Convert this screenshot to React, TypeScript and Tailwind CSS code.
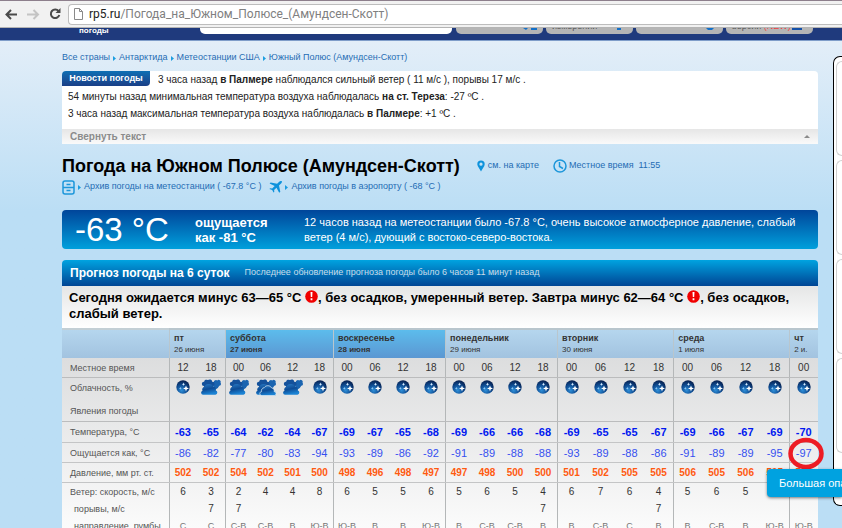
import type { ReactNode } from "react";

type Sky = "clear" | "cloud" | "overcast";

interface Hour {
  time: string;
  sky: Sky;
  temp: number;
  feels: number;
  pressure: number;
  wind: number;
  gust?: number;
  dir: string;
}

interface Day {
  name: string;
  date: string;
  col: string;
  weekend?: boolean;
  hours: Hour[];
}

const h = (
  time: string,
  temp: number,
  feels: number,
  pressure: number,
  wind: number,
  dir: string,
  gust?: number,
  sky: Sky = "clear",
): Hour => ({ time, temp, feels, pressure, wind, dir, gust, sky });

const days: Day[] = [
  {
    name: "пт",
    date: "26 июня",
    col: "w-[28px]",
    hours: [h("12", -63, -86, 502, 6, "С"), h("18", -65, -82, 502, 3, "С", 7, "cloud")],
  },
  {
    name: "суббота",
    date: "27 июня",
    col: "w-[27px]",
    weekend: true,
    hours: [
      h("00", -64, -77, 504, 2, "С-В", 7, "cloud"),
      h("06", -62, -80, 502, 4, "С-В", undefined, "overcast"),
      h("12", -64, -83, 501, 4, "В", undefined, "cloud"),
      h("18", -67, -94, 500, 8, "Ю-В"),
    ],
  },
  {
    name: "воскресенье",
    date: "28 июня",
    col: "w-[28px]",
    weekend: true,
    hours: [
      h("00", -69, -93, 498, 6, "Ю-В"),
      h("06", -67, -89, 496, 5, "В"),
      h("12", -65, -86, 498, 5, "В"),
      h("18", -68, -92, 497, 6, "Ю-В"),
    ],
  },
  {
    name: "понедельник",
    date: "29 июня",
    col: "w-[28px]",
    hours: [
      h("00", -69, -91, 497, 5, "В"),
      h("06", -66, -89, 498, 6, "С-В"),
      h("12", -66, -88, 500, 5, "С-В"),
      h("18", -68, -88, 500, 4, "В", 7),
    ],
  },
  {
    name: "вторник",
    date: "30 июня",
    col: "w-[29px]",
    hours: [
      h("00", -69, -93, 501, 6, "В"),
      h("06", -65, -89, 502, 7, "С-В"),
      h("12", -65, -88, 505, 6, "С"),
      h("18", -67, -86, 505, 4, "В", 7),
    ],
  },
  {
    name: "среда",
    date: "1 июля",
    col: "w-[29px]",
    hours: [
      h("00", -69, -91, 506, 5, "В"),
      h("06", -66, -89, 505, 6, "С-В"),
      h("12", -67, -89, 506, 5, "В"),
      h("18", -69, -95, 505, 6, "Ю-В"),
    ],
  },
  { name: "чт", date: "2 и.", col: "w-[29px]", hours: [h("00", -70, -97, 505, 6, "Ю-В")] },
];

const crumbs = ["Все страны", "Антарктида", "Метеостанции США", "Южный Полюс (Амундсен-Скотт)"];

function SkyIcon({ sky }: { sky: Sky }) {
  if (sky === "clear") {
    return (
      <svg width="14" height="14" viewBox="0 0 14 14" role="img" aria-label="Ясно">
        <defs>
          <radialGradient id="night" cx="0.4" cy="0.75" r="0.75">
            <stop offset="0" stopColor="#2f8fd8" />
            <stop offset="0.5" stopColor="#0f4f96" />
            <stop offset="1" stopColor="#061f4e" />
          </radialGradient>
        </defs>
        <circle cx="7" cy="7" r="6.7" fill="url(#night)" />
        <path d="M7.500 2.500l.5 1.200 1.200.5-1.200.5-.5 1.200-.5-1.200-1.200-.5 1.200-.5z" fill="#d5ecff" />
        <path d="M10 5.500l.8 2.100 2.200.8-2.200.8-.8 2.300-.8-2.300-2.200-.8 2.200-.8z" fill="#fff" />
        <path d="M4.300 6.800l.4 1.100 1.100.4-1.100.4-.4 1.100-.4-1.100-1.100-.4 1.100-.4z" fill="#9bd2fa" />
      </svg>
    );
  }
  return (
    <svg width="20" height="17" viewBox="0 0 20 17" role="img" aria-label="Облачно">
      <defs>
        <linearGradient id="cloud" x1="0" y1="0" x2="0.3" y2="1">
          <stop offset="0" stopColor="#2a7cc6" />
          <stop offset="0.55" stopColor="#0d4c96" />
          <stop offset="1" stopColor="#1b83d4" />
        </linearGradient>
      </defs>
      <path d="M12.500 7a2.300 2.300 0 0 1 .3-4.300 2.200 2.200 0 0 1 3.500-1.200 2 2 0 0 1 3.200 2.300 1.800 1.800 0 0 1-1.200 3L16.800 9 14.500 10.500 12 9z" fill="#1a64b0" />
      <path d="M2.800 7a2.100 2.100 0 0 1 .3-4.200A2.500 2.500 0 0 1 7 1.100a2.500 2.500 0 0 1 4.200 1.600A2.200 2.200 0 0 1 12 7v2.500H4z" fill="#14519b" />
      <path
        d="M2 15.700a2 2 0 0 1-.5-3.900 2.800 2.800 0 0 1 2-4A4.200 4.200 0 0 1 8 5a4.200 4.200 0 0 1 4.300 2.600 3.300 3.300 0 0 1 2.500 4 2.100 2.100 0 0 1-.3 4.100z"
        fill="url(#cloud)"
      />
      {sky === "overcast" && (
        <path
          d="M6 16.600a2 2 0 0 1-.4-4 2.900 2.900 0 0 1 2.600-3.900 4.300 4.300 0 0 1 7.400.2 3 3 0 0 1 2.500 3.700 2 2 0 0 1 0 4z"
          fill="url(#cloud)"
          stroke="#e3eef6"
          strokeWidth="0.7"
        />
      )}
    </svg>
  );
}

function Alert() {
  return (
    <svg className="inline-block align-[-1px]" width="13" height="13" viewBox="0 0 13 13" role="img" aria-label="Внимание">
      <circle cx="6.500" cy="6.500" r="6.300" fill="#f00000" />
      <path d="M5.500 2h2l-.3 5H5.800zM5.600 8.300h1.800v2H5.600z" fill="#fff" />
    </svg>
  );
}

function Arrow() {
  return (
    <svg className="mx-[3px] shrink-0" width="3" height="6" viewBox="0 0 3 6" aria-hidden="true">
      <path d="M0 1l3 2.500L0 6z" fill="#1c9de0" />
    </svg>
  );
}

function Browser() {
  return (
    <header className="flex h-7 shrink-0 items-center border-t border-b border-t-[#8d7f8c] border-b-[#b4b4b4] bg-[#f1f1f1] pl-[5px]">
      <button type="button" aria-label="Назад" className="w-[22px]">
        <svg width="13" height="11" viewBox="0 0 13 11" fill="none" stroke="#4a4a4a" strokeWidth="2">
          <path d="M12 5.500H2M6 1L1.500 5.500 6 10" />
        </svg>
      </button>
      <button type="button" aria-label="Вперёд" className="w-[22px]">
        <svg width="13" height="11" viewBox="0 0 13 11" fill="none" stroke="#c4c4c4" strokeWidth="2">
          <path d="M0 5.500h11M6.500 1L11 5.500 6.500 10" />
        </svg>
      </button>
      <button type="button" aria-label="Обновить" className="w-[19px]">
        <svg width="12" height="12" viewBox="0 0 12 12">
          <path d="M9.600 3.200A4.300 4.300 0 1 0 10.300 7" fill="none" stroke="#4a4a4a" strokeWidth="2" />
          <path d="M11.500 0v5h-5z" fill="#4a4a4a" />
        </svg>
      </button>
      <div className="flex h-[21px] min-w-0 flex-1 items-center rounded-l-sm border border-r-0 border-[#bdbdbd] bg-white pl-[5px]">
        <svg width="9" height="12" viewBox="0 0 9 12" fill="#fff" stroke="#8a8a8a" aria-hidden="true">
          <path d="M.5.5h5l3 3v8h-8zM5.500.5v3h3" />
        </svg>
        <span className="ml-[6px] font-[Roboto,sans-serif] text-[12px] leading-[18px] whitespace-nowrap text-[#808080]">
          <span className="text-[#222]">rp5.ru</span>/Погода_на_Южном_Полюсе_(Амундсен-Скотт)
        </span>
      </div>
    </header>
  );
}

function NavTab({ children, icon }: { children?: ReactNode; icon: ReactNode }) {
  return (
    <button
      type="button"
      className="flex h-[6px] w-[87px] items-end justify-between overflow-hidden rounded-b-[5px] bg-[#b5b5b5] px-[6px] pb-[2px] text-[9px] leading-[11px] whitespace-nowrap text-[#555]"
    >
      <span>{children}</span>
      <span className="flex h-full items-start">{icon}</span>
    </button>
  );
}

function SiteBar() {
  return (
    <nav className="flex h-[13px] shrink-0 items-start border-b border-[#7f9dc9] bg-[#1f3a7d] pl-[62px]">
      <span className="flex h-[7px] w-[138px] items-end overflow-hidden pl-[17px] text-[8px] leading-[9px] font-bold text-white">погоды</span>
      <input aria-label="Поиск" className="h-[6px] w-[252px] rounded-b-[5px] bg-white" />
      <div className="ml-1 flex gap-[3px]">
        <NavTab
          icon={
            <svg width="14" height="3" viewBox="0 0 14 3" fill="#1470c8">
              <path d="M0 0h5L3 2zM8 0h6v2H8z" />
            </svg>
          }
        />
        <NavTab
          icon={
            <svg width="10" height="3" viewBox="0 0 10 3" fill="#1470c8">
              <path d="M0 0h4v2H0z" />
            </svg>
          }
        >
          измерений
        </NavTab>
        <NavTab
          icon={
            <svg width="11" height="3" viewBox="0 0 11 3" fill="#1470c8">
              <path d="M0 0h8L6 2H2z" />
            </svg>
          }
        />
        <NavTab
          icon={
            <svg width="15" height="3" viewBox="0 0 15 3" fill="#1450a8">
              <path d="M0 0h10v2H0z" />
            </svg>
          }
        >
          версии <span className="text-[#f04040]">(NEW)</span>
        </NavTab>
      </div>
    </nav>
  );
}

function News() {
  return (
    <section className="mt-[5px] overflow-hidden rounded-t-[4px] bg-white text-[10px] leading-[17px] text-[#222]">
      <div className="flex items-start">
        <h2 className="h-[15px] w-[88px] rounded-br-[4px] bg-linear-to-b from-[#0d6fb4] to-[#193f87] text-center text-[9px] leading-[15px] font-bold whitespace-nowrap text-white">
          Новости погоды
        </h2>
        <p className="ml-2">
          3 часа назад <b>в Палмере</b> наблюдался сильный ветер ( 11 м/с ), порывы 17 м/с .
        </p>
      </div>
      <p className="pl-[6px]">
        54 минуты назад минимальная температура воздуха наблюдалась <b>на ст. Тереза</b>: -27 ºC .
      </p>
      <p className="pl-[6px]">
        3 часа назад максимальная температура воздуха наблюдалась <b>в Палмере</b>: +1 ºC .
      </p>
      <button
        type="button"
        className="mt-[7px] flex h-[15px] w-full items-center justify-between bg-linear-to-b from-[#e6e6e6] to-[#fafafa] pr-2 pl-2 text-[10px] leading-[15px] font-bold text-[#8b8b8b]"
      >
        Свернуть текст
        <svg width="6" height="3" viewBox="0 0 6 3" fill="#8b8b8b" aria-hidden="true">
          <path d="M0 3l3-3 3 3z" />
        </svg>
      </button>
    </section>
  );
}

function Title() {
  return (
    <>
      <div className="mt-[10px] flex items-center text-[9px] text-[#1f6cb4]">
        <h1 className="mr-[17px] text-[18px] leading-6 font-bold whitespace-nowrap text-black">
          Погода на Южном Полюсе (Амундсен-Скотт)
        </h1>
        <a href="#map" className="flex items-center gap-[3px] whitespace-nowrap">
          <svg width="8" height="12" viewBox="0 0 8 12" fill="#0d92dc" aria-hidden="true">
            <path fillRule="evenodd" d="M4 .5a3.700 3.700 0 0 1 3.700 3.700C7.700 6.500 5 9 4 11.500 3 9 .3 6.500.3 4.200A3.700 3.700 0 0 1 4 .5zM4 2.600a1.600 1.600 0 1 0 0 3.200 1.600 1.600 0 0 0 0-3.200z" />
          </svg>
          см. на карте
        </a>
        <span className="ml-[14px] flex items-center gap-[2px] whitespace-nowrap">
          <svg width="14" height="14" viewBox="0 0 14 14" fill="none" stroke="#1c96da" strokeWidth="1.500" aria-hidden="true">
            <circle cx="7" cy="7" r="6" />
            <path d="M6.500 3v4.500l3.500 2" />
          </svg>
          Местное время&nbsp; 11:55
        </span>
      </div>
      <div className="mt-px flex h-4 items-center text-[9px] whitespace-nowrap text-[#1f6cb4]">
        <svg width="13" height="15" viewBox="0 0 13 15" fill="none" stroke="#1c96da" strokeWidth="1.500" aria-hidden="true">
          <rect x="1" y="1" width="11" height="13" rx="2" />
          <path d="M1 7.500h11M4.500 4.500h4M4.500 10.500h4" />
        </svg>
        <Arrow />
        <a href="#station">Архив погоды на метеостанции ( -67.8 °C )</a>
        <svg className="ml-2" width="13" height="12" viewBox="0 0 13 12" fill="#0d92dc" aria-hidden="true">
          <path d="M12.800.3c.5.800-.3 1.900-1.300 2.800L10 4.600l1.300 6.200-1.100.900-2.700-5L5.100 9l.2 1.900-.8.700-1.300-2.500L.4 8l.8-.8 2 .2L5.700 5 .6 2.500l1-1 6.500 1.200L9.700 1.200C10.700.300 12-.4 12.800.3z" />
        </svg>
        <Arrow />
        <a href="#airport">Архив погоды в аэропорту ( -68 °C )</a>
      </div>
    </>
  );
}

function Current() {
  return (
    <section className="mt-[15px] flex h-[39px] items-center overflow-hidden rounded-[4px] bg-linear-to-b from-[#00459a] to-[#00a0dc] text-white">
      <p className="w-[133px] shrink-0 pl-[13px] text-[33px] leading-9 whitespace-nowrap">-63 °C</p>
      <p className="w-[109px] shrink-0 text-[13px] leading-[15px] font-bold">
        ощущается
        <br />
        как -81 °C
      </p>
      <p className="text-[11px] leading-[15px]">
        12 часов назад на метеостанции было -67.8 °C, очень высокое атмосферное давление, слабый ветер (4 м/с), дующий с
        востоко-северо-востока.
      </p>
    </section>
  );
}

function Row({
  label,
  indent,
  className,
  cell,
}: {
  label: string;
  indent?: boolean;
  className: string;
  cell: (hour: Hour) => ReactNode;
}) {
  return (
    <tr className={className}>
      <th scope="row" className={`border-inherit text-left text-[9px] font-normal whitespace-nowrap text-[#555] ${indent ? "pl-3" : "pl-2"}`}>
        {label}
      </th>
      {days.flatMap((day) =>
        day.hours.map((hour, i) => (
          <td key={day.date + hour.time} className={`border-inherit p-0 ${i === 0 ? "shadow-[inset_1px_0_0_#b4b7b8]" : ""}`}>
            {cell(hour)}
          </td>
        )),
      )}
    </tr>
  );
}

function Forecast() {
  return (
    <section className="mt-[11px] overflow-hidden rounded-t-[4px]">
      <div className="flex h-[26px] items-center bg-linear-to-b from-[#00a3e0] to-[#004594] pl-2 whitespace-nowrap">
        <h2 className="text-[12px] font-bold text-white">Прогноз погоды на 6 суток</h2>
        <span className="ml-[15px] text-[9px] text-[#c9dcea]">Последнее обновление прогноза погоды было 6 часов 11 минут назад</span>
      </div>
      <p className="h-[42px] bg-linear-to-b from-[#e5e6e6] to-white pt-1 pl-[7px] text-[13px] leading-4 font-bold text-black">
        Сегодня ожидается минус 63—65 °C <Alert />, без осадков, умеренный ветер. Завтра минус 62—64 °C <Alert />, без осадков, слабый
        ветер.
      </p>
      <table className="w-full table-fixed border-separate border-spacing-0 bg-linear-to-b from-[#d7d8d9] to-[#fcfcfc] text-center text-[11px] leading-[14px] text-[#333]">
        <colgroup>
          <col className="w-[107px]" />
          {days.flatMap((day) => day.hours.map((hour) => <col key={day.date + hour.time} className={day.col} />))}
        </colgroup>
        <thead>
          <tr className="h-[30px]">
            <td className="border-t-2 border-[#c3cfd5] bg-linear-to-b from-[#b5d6ee] to-[#a2c3e0]" />
            {days.map((day) => (
              <th
                key={day.date}
                scope="colgroup"
                colSpan={day.hours.length}
                className={`border-t-2 border-l border-[#b9c6cd] bg-linear-to-b py-0 pl-1 text-left text-[9px] leading-[11px] whitespace-nowrap ${
                  day.weekend ? "from-[#5cbcec] to-[#5b97d2] font-bold" : "from-[#b5d6ee] to-[#a2c3e0] font-normal"
                }`}
              >
                <b>{day.name}</b>
                <br />
                <span className="text-[8px]">{day.date}</span>
              </th>
            ))}
          </tr>
        </thead>
        <tbody>
          <Row label="Местное время" className="h-5 border-[#bbbcbd] text-[10px] *:border-b" cell={(x) => x.time} />
          <Row
            label="Облачность, %"
            className="h-[22px] align-top leading-[20px]"
            cell={(x) => (
              <span className="flex h-[18px] items-center justify-center">
                <SkyIcon sky={x.sky} />
              </span>
            )}
          />
          <Row label="Явления погоды" className="h-[22px] border-[#bbbcbd] *:border-b" cell={() => null} />
          <Row label="Температура, °C" className="h-[21px] border-[#c4c5c6] *:border-b" cell={(x) => <b className="text-[#0018f0]">{x.temp}</b>} />
          <Row label="Ощущается как, °C" className="h-5 border-[#c4c5c6] *:border-b" cell={(x) => <span className="text-[#3550f0]">{x.feels}</span>} />
          <Row
            label="Давление, мм рт. ст."
            className="h-5 border-[#c4c5c6] *:border-b"
            cell={(x) => <b className="text-[10px] text-[#ff5a10]">{x.pressure}</b>}
          />
          <Row label="Ветер: скорость, м/с" className="h-[17px] text-[10px]" cell={(x) => x.wind} />
          <Row label="порывы, м/с" indent className="h-[17px] text-[10px]" cell={(x) => x.gust} />
          <Row label="направление, румбы" indent className="h-[17px] text-[9px] text-[#777]" cell={(x) => x.dir} />
        </tbody>
      </table>
    </section>
  );
}

export default function App() {
  return (
    <div className="relative flex h-screen flex-col overflow-hidden bg-[#bbdef5] font-['Liberation_Sans',Arial,sans-serif]">
      <Browser />
      <SiteBar />
      <div className="flex min-h-0 flex-1 items-start bg-linear-to-b from-[#e3eef8] to-[#bbdef5] to-[170px] pl-[62px]">
        <main className="min-w-0 flex-1">
          <nav aria-label="Навигация" className="mt-[9px] flex h-4 items-center text-[9px] whitespace-nowrap text-[#1f6cb4]">
            {crumbs.map((crumb, i) => (
              <span key={crumb} className="flex items-center">
                {i > 0 && <Arrow />}
                <a href="#crumb">{crumb}</a>
              </span>
            ))}
          </nav>
          <News />
          <Title />
          <Current />
          <Forecast />
        </main>
        <aside className="mt-[15px] ml-[15px] h-[450px] w-[9px] shrink-0 overflow-hidden rounded-l-[7px] border border-r-0 border-black bg-white pt-1 pl-[2px]">
          <div className="flex flex-col gap-1">
            {[0, 1, 2, 3].map((card) => (
              <div key={card} className="h-[95px] rounded-l-[6px] border border-r-0 border-[#cfcfcf]" />
            ))}
          </div>
        </aside>
      </div>
      <svg className="absolute top-[437px] right-[18px]" width="36" height="33" viewBox="0 0 36 33" fill="none" aria-hidden="true">
        <ellipse cx="18" cy="16.500" rx="15.500" ry="13.500" stroke="#ed1c24" strokeWidth="4.500" />
      </svg>
      <div
        role="tooltip"
        className="absolute top-[469px] right-0 h-7 w-[75px] overflow-hidden rounded-l-[4px] bg-[#00a2e0] pl-3 text-[11px] leading-7 whitespace-nowrap text-white shadow-[0_1px_3px_rgba(0,0,0,0.5)]"
      >
        Большая опасность
      </div>
    </div>
  );
}
